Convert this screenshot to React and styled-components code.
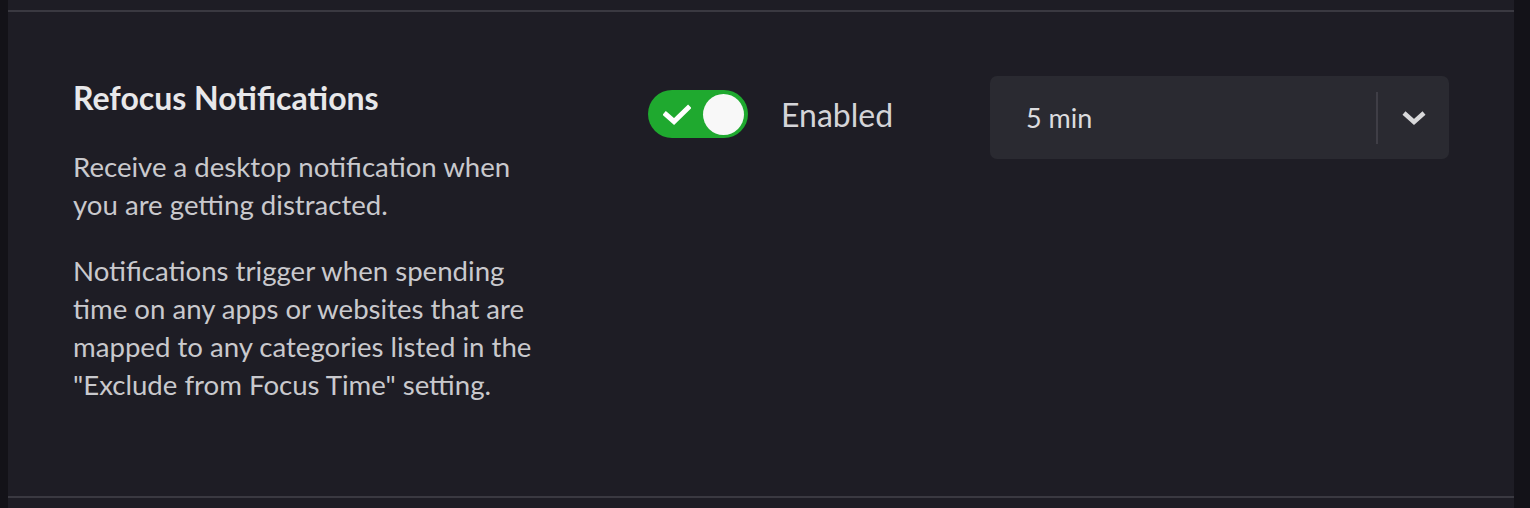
import React from 'react';
import styled, { createGlobalStyle } from 'styled-components';

const Global = createGlobalStyle`
  html, body {
    margin: 0;
    padding: 0;
    background: #131218;
    font-family: Lato, "Noto Sans", sans-serif;
  }
`;

const Page = styled.div`
  display: flex;
  height: 508px;
  padding-left: 8px;
  padding-right: 16px;
  box-sizing: border-box;
`;

const Panel = styled.div`
  flex: 1;
  background: #1e1d25;
  padding-top: 10px;
`;

const Row = styled.section`
  display: grid;
  grid-template-columns: 575px 342px 1fr;
  align-items: start;
  padding: 64px 65px 0 65px;
  height: 488px;
  box-sizing: border-box;
  border-top: 2px solid #3a3941;
  border-bottom: 2px solid #3a3941;
`;

const Info = styled.div`
  width: 470px;
`;

const Title = styled.h3`
  margin: 2px 0 30px;
  font-size: 32px;
  line-height: 40px;
  font-weight: 700;
  color: #e8e8ea;
`;

const Text = styled.p`
  margin: 0 0 28px;
  font-size: 27.6px;
  line-height: 38px;
  color: #c9c9cd;
`;

const ToggleGroup = styled.div`
  display: flex;
  align-items: center;
  gap: 33px;
  height: 76px;
`;

const Switch = styled.button`
  position: relative;
  width: 100px;
  height: 48px;
  border: none;
  border-radius: 24px;
  padding: 0;
  background: ${(p) => (p.on ? '#1fa92f' : '#55545c')};
  cursor: pointer;
`;

const Knob = styled.span`
  position: absolute;
  top: 3.5px;
  left: ${(p) => (p.on ? '55px' : '4px')};
  width: 41px;
  height: 41px;
  border-radius: 50%;
  background: #f8f8f8;
`;

const Check = styled.svg`
  position: absolute;
  left: 15px;
  top: 14px;
`;

const Label = styled.span`
  font-size: 32px;
  color: #d4d4d8;
`;

const Select = styled.div`
  display: flex;
  align-items: center;
  height: 83px;
  background: #2a2a31;
  border-radius: 7px;
  cursor: pointer;
`;

const Value = styled.span`
  flex: 1;
  padding-left: 36px;
  font-size: 27px;
  color: #dcdcdf;
`;

const Divider = styled.span`
  width: 2px;
  height: 52px;
  background: #3f3e46;
`;

const Arrow = styled.span`
  display: flex;
  justify-content: center;
  align-items: center;
  width: 71px;
  color: #d8d8da;
`;

export default function App() {
  return (
    <>
      <Global />
      <Page>
        <Panel>
          <Row>
            <Info>
              <Title>Refocus Notifications</Title>
              <Text>Receive a desktop notification when you are getting distracted.</Text>
              <Text>
                Notifications trigger when spending time on any apps or websites that are mapped to any
                categories listed in the "Exclude from Focus Time" setting.
              </Text>
            </Info>
            <ToggleGroup>
              <Switch on={1}>
                <Check width="28" height="21" viewBox="0 0 28 21">
                  <path d="M3 10.5 L11 17.5 L25 4" fill="none" stroke="#fff" strokeWidth="5" strokeLinecap="square" />
                </Check>
                <Knob on={1} />
              </Switch>
              <Label>Enabled</Label>
            </ToggleGroup>
            <Select>
              <Value>5 min</Value>
              <Divider />
              <Arrow>
                <svg width="26" height="17" viewBox="0 0 26 17">
                  <path d="M3 4 L13 13 L23 4" fill="none" stroke="currentColor" strokeWidth="4.5" />
                </svg>
              </Arrow>
            </Select>
          </Row>
        </Panel>
      </Page>
    </>
  );
}
